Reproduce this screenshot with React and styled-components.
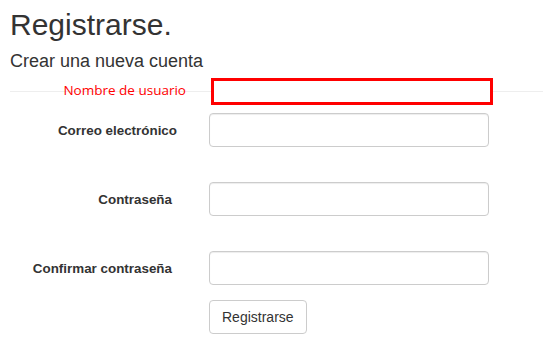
import React from 'react'
import styled, {createGlobalStyle} from 'styled-components';

const GlobalStyle = createGlobalStyle`
  html, body {
    margin: 0;
    padding: 0;
    background: #fff;
  }
  body {
    font-family: "Liberation Sans", Arial, sans-serif;
    font-size: 14px;
    color: #333;
  }
`

const fields = [
    {label: 'Correo electrónico', type: 'email', pad: 17},
    {label: 'Contraseña', type: 'password', pad: 22},
    {label: 'Confirmar contraseña', type: 'password', pad: 22},
]

const App = () => {
    return (
        <Page>
            <GlobalStyle/>
            <Title>Registrarse.</Title>
            <Subtitle>Crear una nueva cuenta</Subtitle>
            <Divider/>
            <Form onSubmit={e => e.preventDefault()}>
                <UserRow>
                    <UserLabel>Nombre de usuario</UserLabel>
                    <UserInput type="text"/>
                </UserRow>
                {fields.map((f, i) => (
                    <Row key={f.label} first={i === 0}>
                        <Label pad={f.pad}>{f.label}</Label>
                        <Input type={f.type}/>
                    </Row>
                ))}
                <Actions>
                    <Button type="submit">Registrarse</Button>
                </Actions>
            </Form>
        </Page>
    );
}

export default App;

const Page = styled.div`
  padding: 8px 0 0 10px;
`

const Title = styled.h2`
  margin: 0;
  font-size: 30px;
  font-weight: 400;
  line-height: 33px;
  color: #333;
`

const Subtitle = styled.h4`
  margin: 10px 0 0;
  font-size: 18px;
  font-weight: 400;
  line-height: 20px;
  color: #333;
`

const Divider = styled.hr`
  margin: 20px 0 0;
  border: 0;
  border-top: 1px solid #eee;
`

const Form = styled.form`
  display: flex;
  flex-direction: column;
`

const UserRow = styled.div`
  display: flex;
  align-items: flex-start;
  margin-top: -14px;
`

const UserLabel = styled.label`
  width: 184px;
  box-sizing: border-box;
  padding: 3px 8px 0 0;
  text-align: right;
  font-family: "Open Sans", "Noto Sans", sans-serif;
  font-size: 13.5px;
  color: #f00;
`

const UserInput = styled.input`
  box-sizing: border-box;
  width: 282px;
  height: 27px;
  margin-left: 17px;
  border: 3px solid #f00;
  border-radius: 0;
  outline: none;
  background: #fff;
`

const Row = styled.div`
  display: flex;
  align-items: center;
  margin-top: ${props => props.first ? '8px' : '35px'};
`

const Label = styled.label`
  width: 184px;
  box-sizing: border-box;
  padding-right: ${props => props.pad}px;
  text-align: right;
  font-weight: 700;
  font-size: 13.4px;
  color: #333;
`

const Input = styled.input`
  box-sizing: border-box;
  width: 280px;
  height: 34px;
  margin-left: 15px;
  padding: 6px 12px;
  border: 1px solid #ccc;
  border-radius: 4px;
  box-shadow: inset 0 1px 1px rgba(0, 0, 0, .075);
  background: #fff;
  font: inherit;
  outline: none;
`

const Actions = styled.div`
  margin: 15px 0 0 199px;
`

const Button = styled.button`
  height: 34px;
  padding: 6px 12px;
  border: 1px solid #ccc;
  border-radius: 4px;
  background: #fff;
  color: #333;
  font-family: "Liberation Sans", Arial, sans-serif;
  font-size: 14px;
  cursor: pointer;
`
